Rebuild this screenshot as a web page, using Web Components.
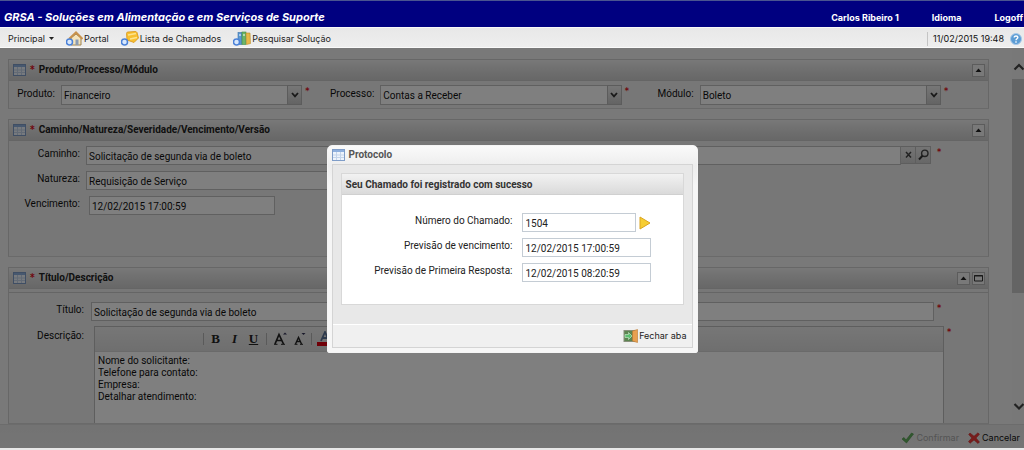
<!DOCTYPE html>
<html lang="pt-BR">
<head>
<meta charset="utf-8">
<title>GRSA - Soluções em Alimentação e em Serviços de Suporte</title>
<style>
html, body { height: 100%; margin: 0; }
body { background: #e8e8e8; font: 10px/12px Roboto, "DejaVu Sans Condensed", sans-serif; color: #111; }
</style>
</head>
<body>
<help-desk></help-desk>

<template id="t-help-desk">
<style>
:host { display: flex; flex-direction: column; height: 100vh; box-sizing: border-box; padding-bottom: 2px; }
.stage { flex: 1; min-height: 0; display: flex; flex-direction: column; position: relative; background: #f2f2f2; }
.view { flex: 1; min-height: 0; display: flex; overflow: hidden; }
.forms { flex: 1; min-width: 0; display: flex; flex-direction: column; gap: 10px; padding: 11px 23px 0 8px; overflow: hidden; }
.forms > * { flex: none; }
.forms > .last { flex: 1; min-height: 0; }
.trio { display: grid; grid-template-columns: repeat(3, minmax(0, 1fr)); padding: 4px 21px 3px 0; }
.stack { display: flex; flex-direction: column; gap: 6px; padding: 5px 46px 41px 0; }
.mask { position: absolute; inset: 0; background: rgba(0,0,0,.5); display: flex; align-items: center; justify-content: center; }
.write { display: flex; flex-direction: column; gap: 5px; padding: 9px 46px 0 0; height: 100%; box-sizing: border-box; }
.write rich-field { flex: 1; min-height: 0; }
</style>
<app-header></app-header>
<app-toolbar></app-toolbar>
<div class="stage">
  <div class="view">
    <div class="forms">
      <form-panel heading="Produto/Processo/Módulo" tools="up">
        <div class="trio">
          <combo-field label="Produto:" value="Financeiro"></combo-field>
          <combo-field label="Processo:" value="Contas a Receber"></combo-field>
          <combo-field label="Módulo:" value="Boleto"></combo-field>
        </div>
      </form-panel>
      <form-panel heading="Caminho/Natureza/Severidade/Vencimento/Versão" tools="up">
        <div class="stack">
          <text-field label="Caminho:" value="Solicitação de segunda via de boleto" lookup required></text-field>
          <text-field label="Natureza:" value="Requisição de Serviço" style="--width:420px"></text-field>
          <text-field label="Vencimento:" value="12/02/2015 17:00:59" style="--width:186px;--gap:9px"></text-field>
        </div>
      </form-panel>
      <form-panel class="last" heading="Título/Descrição" tools="up max" double>
        <div class="write">
          <text-field label="Título:" value="Solicitação de segunda via de boleto" required style="--label:75px;--gap:7px"></text-field>
          <rich-field></rich-field>
        </div>
      </form-panel>
    </div>
    <scroll-track></scroll-track>
  </div>
  <action-bar></action-bar>
  <div class="mask"><protocol-dialog></protocol-dialog></div>
</div>
</template>

<template id="t-app-header">
<style>
:host { display: flex; align-items: center; justify-content: space-between; height: 26px; flex: none; background: #000080; border-top: 1px solid #4a5490; color: #fff; }
h1 { margin: 5px 0 0 4px; font: italic bold 11px/14px Inter, sans-serif; white-space: nowrap; }
nav { display: flex; gap: 33px; margin: 7px 1px 0 0; font: bold 9px/14px Inter, sans-serif; white-space: nowrap; }
a { color: inherit; text-decoration: none; }
</style>
<h1>GRSA - Soluções em Alimentação e em Serviços de Suporte</h1>
<nav><a href="#usuario">Carlos Ribeiro 1</a><a href="#idioma">Idioma</a><a href="#logoff">Logoff</a></nav>
</template>

<template id="t-app-toolbar">
<style>
:host { display: flex; align-items: center; height: 21px; flex: none; box-sizing: border-box; padding: 2px 2px 0 8px; background: linear-gradient(#e8e8e8, #eee); border-top: 1px solid #f8f8f8; border-bottom: 1px solid #fafafa; color: #222; font: 9px/14px Inter, sans-serif; white-space: nowrap; }
button { all: unset; display: flex; align-items: center; gap: 4px; cursor: pointer; }
button svg { width: 5px; height: 3px; }
a { display: flex; align-items: center; color: inherit; text-decoration: none; gap: 1px; margin-left: 12px; }
time { margin-left: auto; border-left: 1px solid #c4c4c4; padding-left: 5px; color: #111; }
button.help { margin-left: 6px; }
</style>
<button type="button">Principal <svg viewBox="0 0 5 3"><path d="M0 0h5L2.500 3z" fill="#222"/></svg></button>
<a href="#portal"><ui-icon name="home"></ui-icon>Portal</a>
<a href="#lista"><ui-icon name="list"></ui-icon>Lista de Chamados</a>
<a href="#pesquisar"><ui-icon name="books"></ui-icon>Pesquisar Solução</a>
<time datetime="2015-02-11T19:48">11/02/2015 19:48</time>
<button type="button" class="help" aria-label="Ajuda"><ui-icon name="help"></ui-icon></button>
</template>

<template id="t-form-panel">
<style>
:host { display: flex; flex-direction: column; border: 1px solid #cfcfcf; border-bottom-color: #d4d4d4; background: #efefef; box-sizing: border-box; min-height: 0; }
header { display: flex; align-items: center; height: 20px; flex: none; padding: 0 3px 0 4px; background: linear-gradient(#f2f2f2, #e2e2e2 40%, #cfcfcf); border-bottom: 1px solid #cacaca; }
h2 { margin: 0; flex: 1; font: bold 10px/14px Roboto, sans-serif; color: #222; }
i { font: bold 10px/12px "DejaVu Sans Condensed", "DejaVu Sans", sans-serif; color: #e01020; margin: 0 4px; }
button { all: unset; display: grid; place-items: center; width: 11px; height: 11px; margin-left: 2px; border: 1px solid #b8b8b8; background: #f2f2f2; }
#tools { display: flex; }
.body { flex: 1; min-height: 0; }
:host([double]) .body { border-top: 1px solid #cacaca; margin-top: 3px; }
svg { display: block; width: 9px; height: 8px; }
</style>
<header><ui-icon name="grid"></ui-icon><i>*</i><h2></h2><span id="tools"></span></header>
<div class="body"><slot></slot></div>
</template>

<template id="t-combo-field">
<style>
:host { display: flex; align-items: flex-start; }
label { width: 46px; margin: 3px 6px 0 0; flex: none; text-align: right; white-space: nowrap; }
.box { flex: 1; min-width: 0; display: grid; grid-template-columns: 1fr 15px; margin-right: 3px; }
select { all: unset; grid-area: 1 / 1 / 2 / 3; box-sizing: border-box; height: 20px; border: 1px solid #c0c0c0; background: #fff; padding: 2px 18px 0 2px; font: inherit; line-height: 16px; }
.box span { grid-area: 1 / 2; pointer-events: none; display: grid; place-items: center; background: linear-gradient(#eee, #c8c8c8); border: 1px solid #b8b8b8; }
.box svg { width: 8px; height: 6px; }
i { width: 23px; flex: none; font: bold 9px/12px "DejaVu Sans Condensed", "DejaVu Sans", sans-serif; color: #e01020; }
</style>
<label for="f"></label>
<div class="box"><select id="f"><option></option></select><span><svg viewBox="0 0 8 6"><path d="M1 1l3 3.400L7 1" fill="none" stroke="#333" stroke-width="1.800"/></svg></span></div>
<i>*</i>
</template>

<template id="t-text-field">
<style>
:host { display: flex; align-items: flex-start; }
label { width: var(--label, 71px); margin: 2px var(--gap, 6px) 0 0; flex: none; text-align: right; white-space: nowrap; }
input { font: inherit; color: inherit; box-sizing: border-box; height: 19px; border: 1px solid #c0c0c0; border-radius: 0; background: #fff; padding: 1px 2px 0 2px; margin: 0; min-width: 0; width: var(--width, auto); outline: none; }
:host([required]) input { flex: 1; }
button { all: unset; box-sizing: border-box; width: 15px; height: 18px; flex: none; display: grid; place-items: center; background: linear-gradient(#eaeaea, #cfcfcf); border: 1px solid #bcbcbc; border-left: 0; }
svg { display: block; width: 11px; height: 12px; }
i { width: 5px; margin: 0 0 0 6px; font: bold 9px/12px "DejaVu Sans Condensed", "DejaVu Sans", sans-serif; color: #e01020; }
:host(:not([lookup])) i { margin-left: 3px; }
:host(:not([lookup])) button, :host(:not([required])) i { display: none; }
</style>
<label for="f"></label><input id="f" type="text">
<button type="button" aria-label="Limpar"><svg viewBox="0 0 11 12"><path d="M3 3l5 5.500M8 3L3 8.500" stroke="#444" stroke-width="1.500"/></svg></button>
<button type="button" aria-label="Pesquisar"><svg viewBox="0 0 11 12"><circle cx="6.800" cy="4.300" r="3.200" fill="none" stroke="#444" stroke-width="1.400"/><path d="M4.500 6.800L1 10.500" stroke="#333" stroke-width="2"/></svg></button>
<i>*</i>
</template>

<template id="t-rich-field">
<style>
:host { display: flex; align-items: stretch; margin-right: -10px; }
label { width: 75px; margin: 4px 10px 0 0; flex: none; text-align: right; }
.editor { flex: 1; min-width: 0; border: 1px solid #bcbcbc; border-bottom: 0; display: flex; flex-direction: column; background: #fff; }
.bar { display: flex; align-items: center; height: 24px; flex: none; padding-left: 105px; background: linear-gradient(#eee, #dedede); border-bottom: 1px solid #d4d4d4; }
.bar button { all: unset; width: 19px; height: 20px; display: grid; place-items: center; font: bold 13px/20px "Liberation Serif", serif; color: #222; }
.bar button.i { font-style: italic; } .bar button.u { text-decoration: underline; }
.bar hr { width: 1px; height: 12px; border: 0; background: #b4b4b4; margin: 0 3px; }
.bar hr:first-child { margin-right: 2px; }
svg { display: block; width: 16px; height: 16px; }
textarea { flex: 1; min-height: 0; border: 0; outline: 0; resize: none; background: transparent; padding: 3px; margin: 0; font: inherit; color: inherit; overflow: hidden; }
i { width: 5px; margin: 0 0 0 3px; font: bold 9px/12px "DejaVu Sans Condensed", "DejaVu Sans", sans-serif; color: #e01020; }
</style>
<label for="f">Descrição:</label>
<div class="editor">
<div class="bar"><hr><button type="button" class="b">B</button><button type="button" class="i">I</button><button type="button" class="u">U</button><hr>
<button type="button" aria-label="Aumentar texto"><svg viewBox="0 0 16 16"><path d="M3 13L7 3.500L11.500 13M4.500 9.500h5.500" fill="none" stroke="#222" stroke-width="1.700"/><path d="M2 13.300h3.500M9 13.300h4" stroke="#222"/><path d="M11 3.500l2-2 2 2z" fill="#335"/></svg></button>
<button type="button" aria-label="Diminuir texto"><svg viewBox="0 0 16 16"><path d="M4.500 13L7.500 6.500L10.500 13M5.500 10.500h4" fill="none" stroke="#222" stroke-width="1.400"/><path d="M3.500 13.300h3M9 13.300h3" stroke="#222"/><path d="M10.500 2l2 2 2-2z" fill="#335"/></svg></button><hr>
<button type="button" aria-label="Cor do texto"><svg viewBox="0 0 16 16"><path d="M4 10L8 1L12 10M5.500 7h5" fill="none" stroke="#5a7298" stroke-width="1.800"/><path d="M0 11h16v4H0z" fill="#e00010"/></svg></button></div>
<textarea id="f">Nome do solicitante:
Telefone para contato:
Empresa:
Detalhar atendimento:</textarea>
</div>
<i>*</i>
</template>

<template id="t-scroll-track">
<style>
:host { display: flex; flex-direction: column; width: 12px; flex: none; padding: 13px 0 12px; box-sizing: border-box; background: #f1f1f1; }
svg { display: block; width: 12px; height: 12px; flex: none; margin-left: 1px; }
.track { flex: 1; margin: 6px 0; } .thumb { height: 68%; background: #c8c8c8; }
</style>
<svg viewBox="0 0 12 12"><path d="M1.500 8.500L6 4l4.500 4.500" fill="none" stroke="#444" stroke-width="2.200"/></svg>
<div class="track"><div class="thumb"></div></div>
<svg viewBox="0 0 12 12"><path d="M1.500 4L6 8.500L10.500 4" fill="none" stroke="#444" stroke-width="2.200"/></svg>
</template>

<template id="t-action-bar">
<style>
:host { display: flex; align-items: center; justify-content: flex-end; gap: 9px; height: 24px; flex: none; padding: 2px 4px 0 0; box-sizing: border-box; background: linear-gradient(#e6e6e6, #ebebeb); border-top: 1px solid #d8d8d8; font: 9px/14px Inter, sans-serif; }
button { all: unset; display: flex; align-items: center; gap: 2px; color: #111; }
button:disabled { color: #a8a8a8; }
</style>
<button type="button" disabled><ui-icon name="check"></ui-icon>Confirmar</button>
<button type="button"><ui-icon name="cross"></ui-icon>Cancelar</button>
</template>

<template id="t-protocol-dialog">
<style>
:host { display: block; box-sizing: border-box; width: 371px; max-width: 100%; margin-top: 2px; padding: 0 4px 4px; border: 1px solid #f4f4f4; border-radius: 5px 5px 2px 2px; background: linear-gradient(#fafafa, #ededed 20px, #f6f6f6 40px); color: #222; }
header { display: flex; align-items: center; gap: 4px; height: 18px; }
h2, h3 { margin: 0; font: bold 10px/14px Roboto, sans-serif; color: #555; }
.frame { border: 1px solid #d4d4d4; background: #e8e8e8; }
.card { margin: 8px 8px 19px; border: 1px solid #d8d8d8; background: #fff; }
h3 { height: 21px; box-sizing: border-box; padding: 4px 5px 2px 4px; background: linear-gradient(#f2f2f2, #dadada); border-bottom: 1px solid #d0d0d0; color: #333; }
form { display: grid; grid-template-columns: 171px 129px auto; gap: 6px 9px; padding: 18px 0 22px; }
label { text-align: right; padding-top: 2px; white-space: nowrap; }
input { font: inherit; color: inherit; box-sizing: border-box; width: 129px; height: 19px; border: 1px solid #c4ccd4; border-radius: 0; background: #fff; padding: 2px 3px 0; margin: 0; outline: none; }
.num, .span { display: flex; } .num { gap: 3px; } .num input { width: 114px; }
.num button { all: unset; display: grid; place-items: center; }
.num svg { display: block; width: 12px; height: 14px; }
.span { grid-column: 2 / 4; }
footer { display: flex; justify-content: flex-end; align-items: center; height: 22px; padding-right: 5px; border-top: 1px solid #fff; background: #f0f0f0; }
footer button { all: unset; display: flex; align-items: center; gap: 1px; font: 9px/14px Inter, sans-serif; color: #222; }
</style>
<header><ui-icon name="grid"></ui-icon><h2>Protocolo</h2></header>
<div class="frame">
<div class="card"><h3>Seu Chamado foi registrado com sucesso</h3>
<form>
<label for="n">Número do Chamado:</label><div class="num span"><input id="n" value="1504"><button type="button" aria-label="Abrir"><svg viewBox="0 0 12 14"><path d="M1 1l10 6L1 13z" fill="#f6cd32" stroke="#dba520"/></svg></button></div>
<label for="v">Previsão de vencimento:</label><div class="span"><input id="v" value="12/02/2015 17:00:59"></div>
<label for="r">Previsão de Primeira Resposta:</label><div class="span"><input id="r" value="12/02/2015 08:20:59"></div>
</form></div>
<footer><button type="button"><ui-icon name="door"></ui-icon>Fechar aba</button></footer>
</div>
</template>

<script>
const ICONS = {
  grid: [13, 12, '<rect x=".5" y=".5" width="12" height="11" fill="#eef4fc" stroke="#7f9dc8"/><path d="M1 1h11v2H1z" fill="#8fb0de"/><path d="M4.500 3v8M8.500 3v8M1 6h11M1 8.500h11" stroke="#c4d4ea"/>'],
  home: [17, 15, '<path d="M5 7v7h10V7l-5-4z" fill="#f4e4bc" stroke="#a08450"/><path d="M3 8L10 1.500L16.500 8" fill="none" stroke="#c8924c" stroke-width="2"/><rect x="9.500" y="8.500" width="3" height="5.500" fill="#8a9cb4"/><circle cx="3.500" cy="11" r="3" fill="#d8e8fc" stroke="#4c82d8" stroke-width="1.500"/>'],
  list: [18, 15, '<path d="M5.500 2.500Q5.500 1 7 1l7-.5q1.500 0 2 1l1.500 5.500-4.500 4.500L6 9z" fill="#f8c030" stroke="#d89418" stroke-width=".8"/><path d="M7 4l8-1.500M9 8l7-1.500" stroke="#fce490" stroke-width="1.500"/><circle cx="3.500" cy="11" r="3" fill="#d8e8fc" stroke="#4c82d8" stroke-width="1.500"/>'],
  books: [18, 15, '<rect x="5" y="1.500" width="4" height="12" fill="#5c98d0" stroke="#3c74ac" stroke-width=".6"/><rect x="9" y="1" width="4" height="12.500" fill="#6cb468" stroke="#448c40" stroke-width=".6"/><path d="M13 2h4l.5 10.500-4 1z" fill="#e8b848" stroke="#b88c28" stroke-width=".6"/><path d="M6 4h2M10 4h2" stroke="#fff"/><circle cx="3.500" cy="11" r="3" fill="#d8e8fc" stroke="#4c82d8" stroke-width="1.500"/>'],
  help: [12, 12, '<circle cx="6" cy="6" r="5.500" fill="#5c9cd4" stroke="#a8c8e8"/><path d="M4.200 4.600C4.200 2.400 7.900 2.500 7.800 4.600C7.700 5.800 6 5.800 6 7.300M6 8.300v1.400" fill="none" stroke="#fff" stroke-width="1.400"/>'],
  check: [13, 12, '<path d="M1 7l2-1.500 2 2.500L10.500 1l2 1L5.500 11z" fill="#62b05c" stroke="#4a9448" stroke-width=".6"/>'],
  cross: [12, 12, '<path d="M2 1l4 3.200L10 .8l1.500 1.500L8 6l3.500 4L10 11.500 6 8 2 11.300.5 9.500 3.800 6 .7 2.500z" fill="#ee3a38" stroke="#c82020" stroke-width=".5"/>'],
  door: [15, 14, '<rect x="1" y="1.500" width="11" height="11" fill="#5c8450" stroke="#88907c"/><path d="M9.500 2l5-1.500v13l-5-1.500z" fill="#e8a050" stroke="#b87830" stroke-width=".6"/><path d="M2 5.500h3.500v-2L9 7l-3.500 3.500v-2H2z" fill="#5cc070" stroke="#d4ecd4" stroke-width=".6"/>'],
};
const stamp = (host, id) => {
  const root = host.attachShadow({ mode: 'open' });
  root.append(document.getElementById('t-' + id).content.cloneNode(true));
  return root;
};
class UiIcon extends HTMLElement {
  connectedCallback() {
    if (this.shadowRoot) return;
    const [w, h, body] = ICONS[this.getAttribute('name')];
    this.attachShadow({ mode: 'open' }).innerHTML = `<style>:host{display:block;flex:none}svg{display:block}</style><svg width="${w}" height="${h}" viewBox="0 0 ${w} ${h}" aria-hidden="true">${body}</svg>`;
  }
}
customElements.define('ui-icon', UiIcon);

for (const name of ['app-header', 'app-toolbar', 'rich-field', 'scroll-track', 'action-bar', 'protocol-dialog']) {
  customElements.define(name, class extends HTMLElement {
    connectedCallback() { if (!this.shadowRoot) stamp(this, name); }
  });
}
customElements.define('form-panel', class extends HTMLElement {
  connectedCallback() {
    if (this.shadowRoot) return;
    const root = stamp(this, 'form-panel');
    root.querySelector('h2').textContent = this.getAttribute('heading');
    const glyph = {
      up: ['Recolher', '<path d="M1.500 6L4.500 2.500L7.500 6z" fill="#222"/>'],
      max: ['Maximizar', '<path d="M.500 1.500h8v5.500h-8zM0 2h9" fill="none" stroke="#333"/>'],
    };
    for (const t of this.getAttribute('tools').split(' ')) {
      root.getElementById('tools').insertAdjacentHTML('beforeend', `<button type="button" aria-label="${glyph[t][0]}"><svg viewBox="0 0 9 8">${glyph[t][1]}</svg></button>`);
    }
  }
});
customElements.define('combo-field', class extends HTMLElement {
  connectedCallback() {
    if (this.shadowRoot) return;
    const root = stamp(this, 'combo-field');
    root.querySelector('label').textContent = this.getAttribute('label');
    root.querySelector('option').textContent = this.getAttribute('value');
  }
});
customElements.define('text-field', class extends HTMLElement {
  connectedCallback() {
    if (this.shadowRoot) return;
    const root = stamp(this, 'text-field');
    root.querySelector('label').textContent = this.getAttribute('label');
    root.querySelector('input').value = this.getAttribute('value');
  }
});
customElements.define('help-desk', class extends HTMLElement {
  connectedCallback() { if (!this.shadowRoot) stamp(this, 'help-desk'); }
});
</script>
</body>
</html>
